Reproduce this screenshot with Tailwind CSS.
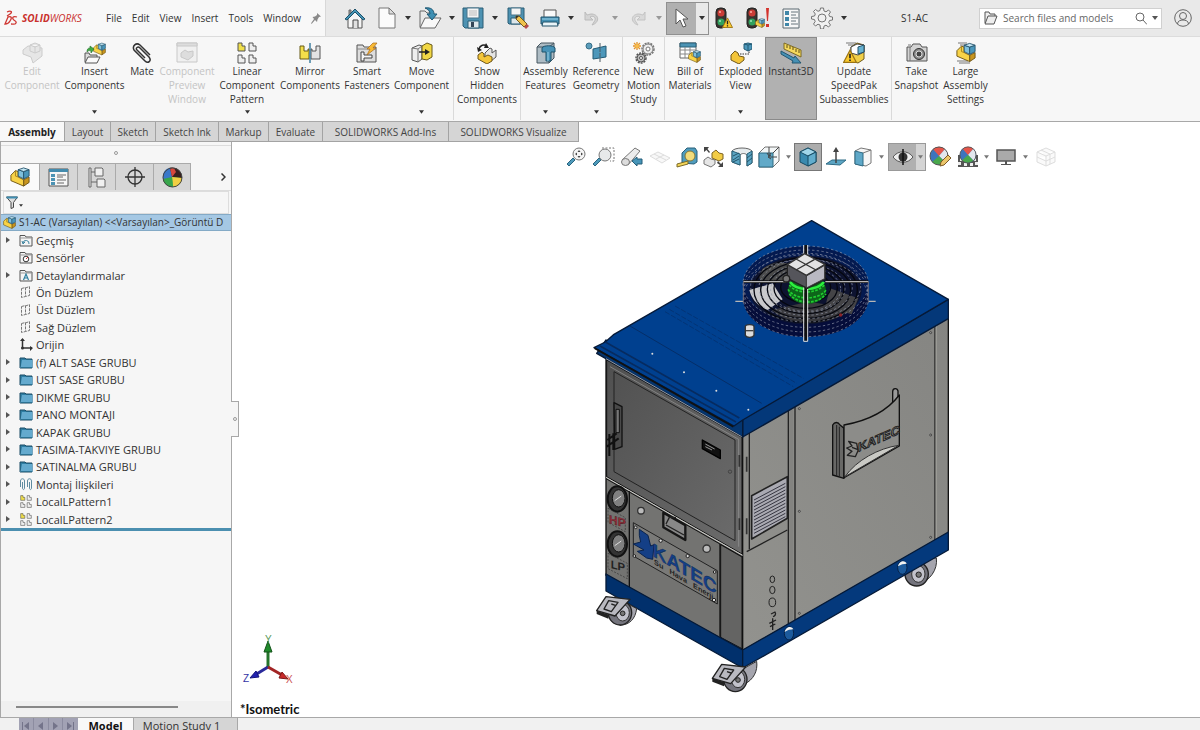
<!DOCTYPE html>
<html lang="en">
<head>
  <meta charset="UTF-8" />
  <meta name="viewport" content="width=device-width, initial-scale=1.0"/>
  <title>SOLIDWORKS - S1-AC</title>
  <script src="https://cdn.jsdelivr.net/npm/@tailwindcss/browser@4"></script>
</head>
<body class="h-screen flex flex-col overflow-hidden bg-[#f7f7f7] text-[#333] text-[10px] font-['Open_Sans','Noto_Sans',sans-serif]">

  <!-- Shared icons -->
  <svg class="hidden" aria-hidden="true">
    <symbol id="caret" viewBox="0 0 6 4"><path d="M0 0h6L3 4z" fill="currentColor"/></symbol>
    <symbol id="tri" viewBox="0 0 4 6"><path d="M0 0l4 3-4 3z" fill="#555"/></symbol>
    <symbol id="asm" viewBox="0 0 22 22">
      <path d="M15 14l6-3v6l-6 4z" fill="#c8951f" stroke="#6b5212"/>
      <path d="M1 9l5-5 3 1v6l6 3v7L1 15z" fill="#f8d347" stroke="#6b5212"/>
      <path d="M6 4v6l3 1" fill="none" stroke="#a3801f"/>
      <path d="M9 3l6 2v8l-6-3z" fill="#7fc0dc" stroke="#24536b"/><path d="M15 5l6-2v7l-6 3z" fill="#4a97bb" stroke="#24536b"/><path d="M9 3l6-2 6 2-6 2z" fill="#c3e6f3" stroke="#24536b"/>
    </symbol>
    <symbol id="folder" viewBox="0 0 14 13">
      <path d="M1 2h5l1 1h6v9H1z" fill="#2f7ea3" stroke="#1c4c66"/><path d="M3 4h10.500v8H1.500z" fill="#64aace"/><path d="M2 11.500h11" stroke="#2c7292"/>
    </symbol>
    <symbol id="sysfolder" viewBox="0 0 14 13"><path d="M1 12V1.500h5l1 1.500h6v9z" fill="#f4f4f4" stroke="#555"/><path d="M1 4h12" stroke="#999"/></symbol>
    <symbol id="plane" viewBox="0 0 14 14"><path d="M2.500 3.500l4-1v9l-4 1zM6.500 3l4-1.500v9l-4 1" fill="none" stroke="#777" stroke-dasharray="3 1"/></symbol>
    <symbol id="pattern" viewBox="0 0 22 22">
      <path d="M2 1h4v3h3v5H2z" fill="#f0df4a" stroke="#555"/>
      <path d="M13 1h4v3h3v5h-7zM2 13h4v3h3v5H2zM13 13h4v3h3v5h-7z" fill="#eee" stroke="#555"/>
    </symbol>
    <symbol id="lights" viewBox="0 0 22 22">
      <rect x="1" y="1" width="10" height="20" rx="4" fill="#3a332f" stroke="#222"/><circle cx="6" cy="6" r="3.500" fill="#c93c36"/><circle cx="5" cy="5" r="1" fill="#ffb1a8"/><circle cx="6" cy="15" r="3.500" fill="#31a15e"/><circle cx="5" cy="14" r="1" fill="#9feab8"/>
    </symbol>
    <symbol id="warn" viewBox="0 0 12 12"><path d="M6 1l5.500 10.500H.500z" fill="#f9c92f" stroke="#9b7415"/><path d="M6 4v4M6 9v1.300" stroke="#222" stroke-width="1.400"/></symbol>
    <symbol id="ball" viewBox="0 0 20 20">
      <circle cx="10" cy="10" r="9" fill="#3d75bd"/><path d="M10 10L4 3a9 9 0 0 1 12 0z" fill="#e6554a"/><path d="M10 10l6-7a9 9 0 0 1 0 13z" fill="#e3e7ee"/><path d="M10 10l6 6a9 9 0 0 1-13 0z" fill="#49a84d"/><circle cx="10" cy="10" r="9" fill="none" stroke="#555"/>
    </symbol>
  </svg>

  <!-- Title bar -->
  <header class="h-[37px] shrink-0 flex items-stretch border-b border-[#dcdcdc] bg-[#e9e9e9]">
    <div class="w-[326px] flex items-center bg-[#f8f8f8] border-r border-[#d8d8d8] text-[#333]">
      <div class="flex items-center gap-1 pl-1 w-[98px] text-[#c9302c]" aria-label="SOLIDWORKS">
        <svg class="w-[14px] h-[16px]" viewBox="0 0 14 16" fill="none" stroke="#cf3934" stroke-width="1.300"><path d="M3 2c4-2 6 0 3 2L3 6M1 14l3-7c4-1 4 1 2 4-1 2-3 3-5 3zM13 7c-3-1-5 0-4 2s4 2 3 4-3 1-5 1"/></svg>
        <span class="text-[10px] italic"><b>SOLID</b>WORKS</span>
      </div>
      <nav class="flex gap-[10px] pl-2">
        <a href="#">File</a><a href="#">Edit</a><a href="#">View</a><a href="#">Insert</a><a href="#">Tools</a><a href="#">Window</a>
      </nav>
      <button class="ml-auto mr-1" aria-label="Pin menu"><svg class="w-[10px] h-[11px]" viewBox="0 0 10 11"><path d="M6 0l4 3.500-2 .5-1.500 2.500L6 9 4 7 1 10.500 0 11l.5-1.500L3 6 1.500 4l2.500-.5L6 2z" fill="#8a8a8a"/></svg></button>
    </div>

    <div class="flex items-center pl-[13px] text-[#333]">
      <button class="w-8 flex justify-center" aria-label="Home"><svg class="w-[22px] h-[22px]" viewBox="0 0 22 22"><path d="M4 10v11h14V10l-7-6z" fill="#f5f5f5" stroke="#555"/><path d="M9 21v-8h5v8" fill="#e0e0e0" stroke="#444"/><path d="M5 8V3h2v3" fill="#999" stroke="#666"/><path d="M1 12L11 2l10 10-2 1-8-8-8 8z" fill="#4593b5" stroke="#1f526a"/></svg></button>
      <button class="w-8 flex justify-center" aria-label="New"><svg class="w-[18px] h-[22px]" viewBox="0 0 18 22"><path d="M1 1h10l6 6v14H1z" fill="#fbfbfb" stroke="#777"/><path d="M11 1v6h6z" fill="#ddd" stroke="#777"/></svg></button>
      <button class="w-[10px] flex justify-center" aria-label="New options"><svg class="w-[6px] h-1"><use href="#caret"/></svg></button>
      <button class="w-[34px] flex justify-center" aria-label="Open"><svg class="w-6 h-[22px]" viewBox="0 0 24 22"><path d="M2 20V4h5l2 2h4v14z" fill="#e8e8e8" stroke="#666"/><path d="M2 21L7 11h16l-6 10z" fill="#f8f8f8" stroke="#666"/><path d="M7 1c6-1 9 2 9 6h3l-5 6-5-6h3c0-3-2-5-5-6z" fill="#3d8fb3" stroke="#1f5873"/></svg></button>
      <button class="w-[10px] flex justify-center" aria-label="Open options"><svg class="w-[6px] h-1"><use href="#caret"/></svg></button>
      <button class="w-8 flex justify-center" aria-label="Save"><svg class="w-[22px] h-[22px]" viewBox="0 0 22 22"><path d="M1 1h20v20H3l-2-2z" fill="#4d92b2" stroke="#2b5d75"/><path d="M5 1h12v10H5z" fill="#f4f4f4" stroke="#49748a"/><path d="M7 4h8M7 6h8M7 8h8" stroke="#bbb"/><path d="M6 14h11v7H6z" fill="#dde6ea" stroke="#2b5d75"/><path d="M9 15h3v5H9z" fill="#345"/></svg></button>
      <button class="w-3 flex justify-center" aria-label="Save options"><svg class="w-[6px] h-1"><use href="#caret"/></svg></button>
      <button class="w-[34px] flex justify-center" aria-label="Save as"><svg class="w-[22px] h-[22px]" viewBox="0 0 22 22"><path d="M1 1h16v16H2l-1-1z" fill="#4d92b2" stroke="#2b5d75"/><path d="M4 1h10v7H4z" fill="#f4f4f4" stroke="#49748a"/><path d="M4 11h9v6H4z" fill="#dde6ea" stroke="#2b5d75"/><path d="M9 9l3 0 8 8-3 3-8-8z" fill="#f0c24c" stroke="#765a1b"/><path d="M17 20l3-3 2 2-3 3z" fill="#b74a4a"/><path d="M9 9h3l-3 3z" fill="#333"/></svg></button>
      <button class="w-[30px] flex justify-center" aria-label="Print"><svg class="w-5 h-5" viewBox="0 0 20 20"><path d="M4 10V2h12v8" fill="#fafafa" stroke="#555"/><path d="M1 9h18v7H1z" fill="#438fb2" stroke="#23536b"/><path d="M3 14h14l1 4H2z" fill="#e9f4f8" stroke="#23536b"/><path d="M2 11h16" stroke="#9fd3e8"/></svg></button>
      <button class="w-3 flex justify-center" aria-label="Print options"><svg class="w-[6px] h-1"><use href="#caret"/></svg></button>
      <button class="w-8 flex justify-center" aria-label="Undo" disabled><svg class="w-[18px] h-[15px]" viewBox="0 0 18 15"><path d="M1 1v8h8L6 6c4-2 7 1 4 5l-2 3c7-2 8-10 0-11-3 0-4 1-5 1z" fill="#d4d4d4" stroke="#bbb"/></svg></button>
      <button class="w-[11px] flex justify-center text-[#999]" aria-label="Undo options" disabled><svg class="w-[6px] h-1"><use href="#caret"/></svg></button>
      <button class="w-[34px] flex justify-center" aria-label="Redo" disabled><svg class="w-[18px] h-[15px] -scale-x-100" viewBox="0 0 18 15"><path d="M1 1v8h8L6 6c4-2 7 1 4 5l-2 3c7-2 8-10 0-11-3 0-4 1-5 1z" fill="#d9d9d9" stroke="#c3c3c3"/></svg></button>
      <button class="w-[10px] flex justify-center text-[#999]" aria-label="Redo options" disabled><svg class="w-[6px] h-1"><use href="#caret"/></svg></button>
      <div class="ml-[2px] h-[33px] flex border border-[#909090]">
        <button class="w-[29px] flex items-center justify-center bg-[#b0b0b0]" aria-label="Select"><svg class="w-[14px] h-5" viewBox="0 0 14 20"><path d="M1 1v15l4-4 3 7 3-1-3-7h5z" fill="#fff" stroke="#555"/></svg></button>
        <button class="w-3 flex items-center justify-center" aria-label="Select options"><svg class="w-[6px] h-1"><use href="#caret"/></svg></button>
      </div>
      <button class="w-[30px] flex justify-center" aria-label="Rebuild"><svg class="w-[18px] h-[22px]" viewBox="0 0 18 22"><use href="#lights" width="22" height="22"/><use href="#warn" x="7" y="10" width="11" height="11"/></svg></button>
      <button class="w-[38px] flex justify-center" aria-label="Rebuild errors"><svg class="w-6 h-[22px]" viewBox="0 0 24 22"><use href="#lights" width="22" height="22"/><use href="#asm" x="9" y="11" width="10" height="10"/><path d="M20 1h3l-1 13h-1zM20 17h3v3h-3z" fill="#d3322c"/></svg></button>
      <button class="w-7 flex justify-center" aria-label="File properties"><svg class="w-[18px] h-[21px]" viewBox="0 0 18 21"><path d="M1 1h16v19H1z" fill="#f7f7f7" stroke="#5a6970"/><path d="M3 3h4v4H3zM3 9h4v4H3zM3 15h4v3H3z" fill="#3f86a8"/><path d="M9 4h7M9 7h5M9 10h7M9 13h5M9 16h7" stroke="#66757c"/></svg></button>
      <button class="w-[34px] flex justify-center" aria-label="Options"><svg class="w-[22px] h-[22px]" viewBox="0 0 22 22" fill="#f1f1f1" stroke="#757575"><path d="M9.500 1h3l.5 3 2 .8 2.500-1.800 2 2-1.700 2.500.8 2 2.900.5v3l-3 .5-.8 2 1.800 2.500-2 2-2.500-1.800-2 .9-.5 2.900h-3L9 18l-2-.8L4.500 19l-2-2 1.700-2.500-.8-2-2.900-.5V9.500l3-.5.8-2L2.500 4.500l2-2L7 4.300 9 3.500z"/><circle cx="11" cy="11" r="4"/></svg></button>
      <button class="w-[9px] flex justify-center" aria-label="More options"><svg class="w-[6px] h-1"><use href="#caret"/></svg></button>
    </div>

    <h1 class="flex-1 self-center text-center pl-[2px]">S1-AC</h1>

    <div class="self-center w-[183px] h-[21px] flex items-center bg-white border border-[#d0d0d0] pl-1 pr-[3px] gap-[5px] text-[#555]">
      <svg class="w-[14px] h-[14px] shrink-0" viewBox="0 0 14 14" fill="#eee" stroke="#555"><path d="M1 12V1h4l1 2h5v2"/><path d="M1 13L4 5h9l-3 8z"/></svg>
      <input type="text" class="min-w-0 flex-1 text-[10px] outline-none placeholder:text-[#666]" placeholder="Search files and models" aria-label="Search files and models"/>
      <button aria-label="Search"><svg class="w-3 h-[13px]" viewBox="0 0 12 13" fill="none" stroke="#666"><circle cx="5" cy="5" r="4"/><path d="M8 8l4 4.500"/></svg></button>
      <button aria-label="Search options"><svg class="w-[6px] h-1"><use href="#caret"/></svg></button>
    </div>
    <button class="w-[38px] flex items-center justify-center pl-1" aria-label="Account"><svg class="w-[18px] h-[18px]" viewBox="0 0 18 18" fill="none" stroke="#666"><circle cx="9" cy="9" r="8.300"/><circle cx="9" cy="7" r="3.500"/><path d="M3.500 15c0-3 3-4 5.500-4s5.500 1 5.500 4"/></svg></button>
  </header>

  <!-- Ribbon -->
  <section class="h-[84px] shrink-0 flex items-stretch pl-[1px] pb-[1px] leading-[14px] text-center">
    <button disabled class="w-[62px] flex flex-col items-center pt-[5px] text-[#c4c4c4]">
      <svg class="w-[22px] h-[22px]" viewBox="0 0 22 22" fill="#e6e6e6" stroke="#ccc"><path d="M2 8l5-4 14 2v8l-9 7-2-6-8-3z"/><path d="M9 3l5-2 5 2v6l-5 2-5-2zM9 3l5 2 5-2M14 5v6"/></svg>
      <span>Edit<br>Component</span>
    </button>
    <button class="w-[63px] flex flex-col items-center pt-[5px]">
      <svg class="w-[22px] h-[22px]" viewBox="0 0 22 22"><path d="M1 20v-9h4l1 2h7v7z" fill="#ddd" stroke="#555"/><path d="M1 21l3-6h12l-3 6z" fill="#fafafa" stroke="#555"/><use href="#asm" x="9" width="13" height="14"/><path d="M3 10c0-3 1-4 3-4V4l4 3-3 4V9c-2-1-3 0-4 1z" fill="#3fa944" stroke="#237128" stroke-width=".6"/></svg>
      <span>Insert<br>Components</span>
      <svg class="w-[5px] h-1 mt-auto mb-[6px]"><use href="#caret"/></svg>
    </button>
    <button class="w-8 flex flex-col items-center pt-[5px]">
      <svg class="w-[22px] h-[22px]" viewBox="0 0 22 22" fill="none" stroke="#333" stroke-width="1.500"><path d="M14 16L6 8c-2-2 1-4 3-2l9 9c3 4-1 7-4 4L3 8C1 4 5 0 9 3l10 10"/></svg>
      <span>Mate</span>
    </button>
    <button disabled class="w-[58px] flex flex-col items-center pt-[5px] text-[#c4c4c4]">
      <svg class="w-[22px] h-[22px]" viewBox="0 0 22 22" fill="#f0f0f0" stroke="#c8c8c8"><path d="M1 1h20v19H1z"/><path d="M1 1h20v3H1z" fill="#ddd"/><path d="M5 11l4-3 3 2 5-1v5l-5 4-7-3z" fill="#ddd"/></svg>
      <span>Component<br>Preview<br>Window</span>
    </button>
    <button class="w-[62px] flex flex-col items-center pt-[5px]">
      <svg class="w-[22px] h-[22px]"><use href="#pattern"/></svg>
      <span>Linear<br>Component<br>Pattern</span>
      <svg class="w-[5px] h-1 mt-auto mb-[6px]"><use href="#caret"/></svg>
    </button>
    <button class="w-16 flex flex-col items-center pt-[5px]">
      <svg class="w-[22px] h-[22px]" viewBox="0 0 22 22"><path d="M1 4h4v5h4V7h1v10H1z" fill="#f3df4a" stroke="#665a16"/><path d="M21 4h-4v5h-4V7h-1v10h9z" fill="#e3e3e3" stroke="#555"/><path d="M11 1v20" stroke="#3f7fa0" stroke-width="1.500"/></svg>
      <span>Mirror<br>Components</span>
    </button>
    <button class="w-[50px] flex flex-col items-center pt-[5px]">
      <svg class="w-[22px] h-[22px]" viewBox="0 0 22 22"><path d="M1 20V3h6l1 2h12v15z" fill="#ddd" stroke="#555"/><path d="M1 7h19" stroke="#888"/><path d="M5 10h3v3h8v3H8v3H5z" fill="#f5f5f5" stroke="#444"/><path d="M17 1h4l-4 5h3l-9 7 3-6h-3z" fill="#f8ba35" stroke="#a7681a" stroke-width=".7"/></svg>
      <span>Smart<br>Fasteners</span>
    </button>
    <button class="w-[59px] flex flex-col items-center pt-[5px]">
      <svg class="w-[22px] h-[22px]" viewBox="0 0 22 22"><path d="M1 6l7-3 3 1v13l-4 3-6-2z" fill="#eee" stroke="#555"/><path d="M1 6l6 1 4-3M7 7v13" fill="none" stroke="#777"/><path d="M11 4l5-3 5 2v12l-5 3-5-1z" fill="#f1d745" stroke="#66591c"/><path d="M8 10h8" stroke="#222" stroke-width="1.500"/><path d="M14 7l5 3-5 3z" fill="#222"/></svg>
      <span>Move<br>Component</span>
      <svg class="w-[5px] h-1 mt-auto mb-[6px]"><use href="#caret"/></svg>
    </button>
    <button class="ml-[2px] w-[67px] flex flex-col items-center pt-[5px] border-l border-[#dadada]">
      <svg class="w-[22px] h-[22px]" viewBox="0 0 22 22"><path d="M9 11l5-5 2 1v4l4-3v7l-5 4-6-3z" fill="#e4e4e4" stroke="#555"/><path d="M2 13l4-3 2 2v3l4-2 4 2v4l-5 3-9-5z" fill="#f3c53a" stroke="#6f571a"/><path d="M3 7c1-4 5-5 8-3" fill="none" stroke="#222" stroke-width="1.500"/><path d="M10 1l3 5-5 0zM1 5l5 3-4 2z" fill="#222"/></svg>
      <span>Show<br>Hidden<br>Components</span>
    </button>
    <button class="w-[50px] flex flex-col items-center pt-[5px] border-l border-[#dadada]">
      <svg class="w-[22px] h-[22px]" viewBox="0 0 22 22"><path d="M2 5l4-4h13v15l-5 5H2z" fill="#aebcc4" stroke="#45555e"/><path d="M2 5h12v16M14 5l5-4" fill="none" stroke="#45555e"/><path d="M7 6c1-3 12-3 13 0v4h-4v9h-5v-9H7z" fill="#4792b6" stroke="#1f526b"/><path d="M13 10v9" stroke="#9bd0e5"/></svg>
      <span>Assembly<br>Features</span>
      <svg class="w-[5px] h-1 mt-auto mb-[6px]"><use href="#caret"/></svg>
    </button>
    <button class="w-[52px] flex flex-col items-center pt-[5px]">
      <svg class="w-[22px] h-[22px]" viewBox="0 0 22 22"><circle cx="4" cy="4" r="3" fill="#5b9dbb" stroke="#376e88"/><path d="M8 7l13-3v11L8 17z" fill="#4d97ba" stroke="#235a74"/><path d="M15 1v20" stroke="#4b5b63" stroke-dasharray="4 1"/></svg>
      <span>Reference<br>Geometry</span>
      <svg class="w-[5px] h-1 mt-auto mb-[6px]"><use href="#caret"/></svg>
    </button>
    <button class="w-[42px] flex flex-col items-center pt-[5px] border-l border-[#dadada]">
      <svg class="w-[22px] h-[22px]" viewBox="0 0 22 22"><circle cx="15" cy="7" r="6" fill="none" stroke="#777" stroke-width="1.500" stroke-dasharray="2 1"/><circle cx="15" cy="7" r="5" fill="#eee" stroke="#777"/><circle cx="15" cy="7" r="2" fill="#fff" stroke="#777"/><circle cx="8" cy="16" r="5" fill="none" stroke="#555" stroke-width="1.500" stroke-dasharray="2 1"/><circle cx="8" cy="16" r="4" fill="#bbb" stroke="#555"/><circle cx="8" cy="16" r="1.500" fill="#fff" stroke="#555"/><path d="M4 0v8M0 4h8M1 1l6 6M7 1L1 7" stroke="#e1932c" stroke-width="1.300"/><circle cx="4" cy="4" r="2" fill="#f7bd4c"/></svg>
      <span>New<br>Motion<br>Study</span>
    </button>
    <button class="w-[51px] flex flex-col items-center pt-[5px] border-l border-[#dadada]">
      <svg class="w-[22px] h-[22px]" viewBox="0 0 22 22"><path d="M1 1h16v15H1z" fill="#fff" stroke="#666"/><path d="M1 1h16v4H1z" fill="#4b93b4" stroke="#2b6079"/><path d="M1 8h16M1 12h16M6 5v11M11 5v11" stroke="#888"/><use href="#asm" x="9" y="8" width="13" height="13"/></svg>
      <span>Bill of<br>Materials</span>
    </button>
    <button class="w-[50px] flex flex-col items-center pt-[5px] border-l border-[#dadada]">
      <svg class="w-[22px] h-[22px]" viewBox="0 0 22 22"><path d="M1 13l4-4 3 2 1 3 5 1v3l-5 4-8-4z" fill="#f3c53a" stroke="#6f571a"/><path d="M10 12h9V8" fill="none" stroke="#333" stroke-dasharray="1.500 1"/><path d="M14 2l4-1 4 1v5l-4 2-4-2z" fill="#4d98bb" stroke="#235a74"/><path d="M14 2l4 1 4-1M18 3v6" fill="none" stroke="#235a74"/></svg>
      <span>Exploded<br>View</span>
      <svg class="w-[5px] h-1 mt-auto mb-[6px]"><use href="#caret"/></svg>
    </button>
    <button class="w-[52px] flex flex-col items-center pt-1 bg-[#b1b1b1] border border-[#8a8a8a]" aria-pressed="true">
      <svg class="w-[22px] h-[22px]" viewBox="0 0 22 22"><path d="M4 1l17 7v7L4 7z" fill="#f5d95d" stroke="#7d6a25"/><path d="M7 3v3M10 4v3M13 5v3M16 7v3M19 8v3" stroke="#5c4d17"/><path d="M1 9l13 7 1-2 6 7-9 0 1-2L1 12z" fill="#4690b4" stroke="#225670"/></svg>
      <span>Instant3D</span>
    </button>
    <button class="w-[74px] flex flex-col items-center pt-[5px]">
      <svg class="w-[22px] h-[22px]" viewBox="0 0 22 22"><path d="M3 1h10M5 3h8" stroke="#777"/><path d="M8 5l6-4 7 2v14l-6 4-7-2z" fill="#f1d04a" stroke="#6f5a1b"/><path d="M8 5l6-3 7 1v7l-6 3-7-2z" fill="#fff" stroke="#444"/><path d="M15 5l6-2v7l-6 2z" fill="#67b2d1" stroke="#24536b"/><use href="#warn" y="7" width="14" height="14"/></svg>
      <span>Update<br>SpeedPak<br>Subassemblies</span>
    </button>
    <button class="w-[50px] flex flex-col items-center pt-[5px] border-l border-[#dadada]">
      <svg class="w-[22px] h-[22px]" viewBox="0 0 22 22"><path d="M1 5h4l2-3h7l2 3h5v14H1z" fill="#d3d3d3" stroke="#555"/><path d="M4 5v14M2 3h3" stroke="#777"/><circle cx="13" cy="12" r="5.500" fill="#8b8b8b" stroke="#333"/><circle cx="13" cy="12" r="3" fill="#444" stroke="#ddd"/></svg>
      <span>Take<br>Snapshot</span>
    </button>
    <button class="w-[49px] flex flex-col items-center pt-[5px]">
      <svg class="w-[22px] h-[22px]" viewBox="0 0 22 22"><path d="M3 1h9M5 3h7M2 19h11M4 21h11" stroke="#777"/><use href="#asm" x="1" width="20" height="21"/></svg>
      <span>Large<br>Assembly<br>Settings</span>
    </button>
  </section>

  <!-- Command tabs -->
  <div class="h-[21px] shrink-0 flex bg-white border-t border-[#a8a8a8]">
    <div class="flex h-full text-[#444] leading-[18px] border-b border-[#a3a3a3]" role="tablist">
      <button role="tab" aria-selected="true" class="w-16 bg-[#f8f8f8] font-bold text-[#222]">Assembly</button>
      <button role="tab" class="w-[46px] bg-[#d5d5d5] border-l border-[#a3a3a3]">Layout</button>
      <button role="tab" class="w-[45px] bg-[#d5d5d5] border-l border-[#a3a3a3]">Sketch</button>
      <button role="tab" class="w-[63px] bg-[#d5d5d5] border-l border-[#a3a3a3]">Sketch Ink</button>
      <button role="tab" class="w-[50px] bg-[#d5d5d5] border-l border-[#a3a3a3]">Markup</button>
      <button role="tab" class="w-[54px] bg-[#d5d5d5] border-l border-[#a3a3a3]">Evaluate</button>
      <button role="tab" class="w-[126px] bg-[#d5d5d5] border-l border-[#a3a3a3]">SOLIDWORKS Add-Ins</button>
      <button role="tab" class="w-[131px] bg-[#d5d5d5] border-x border-[#a3a3a3]">SOLIDWORKS Visualize</button>
    </div>
  </div>

  <div class="flex-1 min-h-0 flex">
    <!-- Feature manager -->
    <aside class="w-[232px] shrink-0 flex flex-col relative z-10 bg-[#f6f6f6] border-x border-[#a8a8a8]">
      <div class="h-[18px] mt-[3px] border-t border-[#dcdcdc] flex justify-center"><i class="w-1 h-1 mt-[5px] rounded-full border border-[#999]"></i></div>
      <div class="h-[28px] flex border-b border-[#dcdcdc]">
        <div class="flex border-t border-[#aaa]" role="tablist">
          <button role="tab" aria-selected="true" class="w-[38px] flex items-center justify-center bg-[#fafafa]" aria-label="Feature tree"><svg class="w-5 h-5"><use href="#asm"/></svg></button>
          <button role="tab" class="w-[38px] flex items-center justify-center bg-[#d6d6d6] border-l border-[#aaa]" aria-label="Properties"><svg class="w-[21px] h-[19px]" viewBox="0 0 21 19"><path d="M1 1h19v17H1z" fill="#f6f6f6" stroke="#555"/><path d="M1 1h19v3H1z" fill="#438bad"/><path d="M3 6h4v3H3zM3 10h4v3H3zM3 14h4v3H3z" fill="#4c93b4"/><path d="M9 7h9M9 9h6M9 12h9M9 15h7" stroke="#666"/></svg></button>
          <button role="tab" class="w-[38px] flex items-center justify-center bg-[#d6d6d6] border-l border-[#aaa]" aria-label="Configurations"><svg class="w-[18px] h-[21px]" viewBox="0 0 18 21" fill="#f0f0f0" stroke="#666"><path d="M1 1h2v19H1zM3 5h4M3 15h6" /><path d="M7 1h7l1 1v7H7zM9 12h7l1 1v7H9z"/></svg></button>
          <button role="tab" class="w-[38px] flex items-center justify-center bg-[#d6d6d6] border-l border-[#aaa]" aria-label="DimXpert"><svg class="w-5 h-5" viewBox="0 0 20 20" fill="none" stroke="#333" stroke-width="1.300"><circle cx="10" cy="10" r="7"/><path d="M10 0v20M0 10h20"/></svg></button>
          <button role="tab" class="w-[38px] flex items-center justify-center bg-[#d6d6d6] border-x border-[#aaa]" aria-label="Display"><svg class="w-[21px] h-[21px]" viewBox="0 0 21 21"><circle cx="10.500" cy="10.500" r="9.500" fill="#37a54b"/><path d="M10 10L7 1c8-2 13 3 13 10z" fill="#382020"/><path d="M10 10l10 1c0 6-5 9-9 9z" fill="#f0cf43"/><path d="M10 10l1 10C5 20 2 16 1 13z" fill="#37a54b"/><path d="M10 10L1 12C0 5 4 1 8 1z" fill="#3a78c9"/><path d="M10 10L8 1l4 0 2 4z" fill="#d6483d"/><circle cx="10.500" cy="10.500" r="9.500" fill="none" stroke="#444"/></svg></button>
        </div>
        <button class="ml-auto w-4 flex items-center justify-center" aria-label="More tabs"><svg class="w-[5px] h-2" viewBox="0 0 5 8" fill="none" stroke="#333" stroke-width="1.500"><path d="M.5 .5L4 4 .5 7.500"/></svg></button>
      </div>
      <div class="h-[23px] mx-[2px] border border-[#ddd] flex items-center pl-[2px] gap-[1px]">
        <button class="flex items-end gap-[1px]" aria-label="Filter"><svg class="w-3 h-[13px]" viewBox="0 0 12 13"><path d="M.5 1h11L7.500 6.500v5L5 12.500v-6z" fill="#ddd" stroke="#444"/><path d="M.5 1.500h11" stroke="#3e8db0" stroke-width="2"/></svg><svg class="w-1 h-[3px] mb-[2px]"><use href="#caret"/></svg></button>
      </div>

      <ul class="h-[314px] grid grid-rows-[repeat(18,1fr)] text-[11px] leading-[15px] whitespace-nowrap text-[#333]">
        <li class="flex items-center gap-[3px] pl-[2px] text-[10px] bg-[#a5c8e4] border-y border-[#84aac6]"><svg class="w-[13px] h-[13px] shrink-0"><use href="#asm"/></svg>S1-AC (Varsayılan) &lt;&lt;Varsayılan&gt;_Görüntü D</li>
        <li class="flex items-center pl-[5px]"><button class="w-[13px]" aria-label="Expand"><svg class="w-1 h-[6px]"><use href="#tri"/></svg></button><svg class="w-[14px] h-[13px] mr-[3px]" viewBox="0 0 14 13"><use href="#sysfolder"/><path d="M4 9a3 3 0 1 1 6 1M3 7l1 3 2-2" fill="none" stroke="#3c839f"/></svg>Geçmiş</li>
        <li class="flex items-center pl-[18px]"><svg class="w-[14px] h-[13px] mr-[3px]" viewBox="0 0 14 13"><use href="#sysfolder"/><circle cx="7" cy="8" r="2.800" fill="#fff" stroke="#333"/><path d="M7 8l2-2" stroke="#c33"/></svg>Sensörler</li>
        <li class="flex items-center pl-[5px]"><button class="w-[13px]" aria-label="Expand"><svg class="w-1 h-[6px]"><use href="#tri"/></svg></button><svg class="w-[14px] h-[13px] mr-[3px]" viewBox="0 0 14 13"><use href="#sysfolder"/><path d="M4.500 11L7 5l2.500 6M5.500 9h3" fill="none" stroke="#2f7f9f" stroke-width="1.200"/></svg>Detaylandırmalar</li>
        <li class="flex items-center pl-[18px]"><svg class="w-[14px] h-[14px] mr-[3px]"><use href="#plane"/></svg>Ön Düzlem</li>
        <li class="flex items-center pl-[18px]"><svg class="w-[14px] h-[14px] mr-[3px]"><use href="#plane"/></svg>Üst Düzlem</li>
        <li class="flex items-center pl-[18px]"><svg class="w-[14px] h-[14px] mr-[3px]"><use href="#plane"/></svg>Sağ Düzlem</li>
        <li class="flex items-center pl-[18px]"><svg class="w-[14px] h-[13px] mr-[3px]" viewBox="0 0 14 13"><path d="M3.500 1v9H13" fill="none" stroke="#333" stroke-width="1.500"/><path d="M1 3l2.500-3L6 3zM11 8l3 2-3 3z" fill="#333"/><circle cx="3.500" cy="10" r="1.500" fill="#333"/></svg>Orijin</li>
        <li class="flex items-center pl-[5px]"><button class="w-[13px]" aria-label="Expand"><svg class="w-1 h-[6px]"><use href="#tri"/></svg></button><svg class="w-[14px] h-[13px] mr-[3px]"><use href="#folder"/></svg>(f) ALT SASE GRUBU</li>
        <li class="flex items-center pl-[5px]"><button class="w-[13px]" aria-label="Expand"><svg class="w-1 h-[6px]"><use href="#tri"/></svg></button><svg class="w-[14px] h-[13px] mr-[3px]"><use href="#folder"/></svg>UST SASE GRUBU</li>
        <li class="flex items-center pl-[5px]"><button class="w-[13px]" aria-label="Expand"><svg class="w-1 h-[6px]"><use href="#tri"/></svg></button><svg class="w-[14px] h-[13px] mr-[3px]"><use href="#folder"/></svg>DIKME GRUBU</li>
        <li class="flex items-center pl-[5px]"><button class="w-[13px]" aria-label="Expand"><svg class="w-1 h-[6px]"><use href="#tri"/></svg></button><svg class="w-[14px] h-[13px] mr-[3px]"><use href="#folder"/></svg>PANO MONTAJI</li>
        <li class="flex items-center pl-[5px]"><button class="w-[13px]" aria-label="Expand"><svg class="w-1 h-[6px]"><use href="#tri"/></svg></button><svg class="w-[14px] h-[13px] mr-[3px]"><use href="#folder"/></svg>KAPAK GRUBU</li>
        <li class="flex items-center pl-[5px]"><button class="w-[13px]" aria-label="Expand"><svg class="w-1 h-[6px]"><use href="#tri"/></svg></button><svg class="w-[14px] h-[13px] mr-[3px]"><use href="#folder"/></svg>TASIMA-TAKVIYE GRUBU</li>
        <li class="flex items-center pl-[5px]"><button class="w-[13px]" aria-label="Expand"><svg class="w-1 h-[6px]"><use href="#tri"/></svg></button><svg class="w-[14px] h-[13px] mr-[3px]"><use href="#folder"/></svg>SATINALMA GRUBU</li>
        <li class="flex items-center pl-[5px]"><button class="w-[13px]" aria-label="Expand"><svg class="w-1 h-[6px]"><use href="#tri"/></svg></button><svg class="w-[14px] h-[13px] mr-[3px]" viewBox="0 0 14 13" fill="none" stroke="#5e8ba0"><path d="M1.500 9V3c0-3 4-3 4 0v7c0 2-2 2-2 0V4M8.500 9V3c0-3 4-3 4 0v7c0 2-2 2-2 0V4"/></svg>Montaj İlişkileri</li>
        <li class="flex items-center pl-[5px]"><button class="w-[13px]" aria-label="Expand"><svg class="w-1 h-[6px]"><use href="#tri"/></svg></button><svg class="w-[14px] h-[13px] mr-[3px]"><use href="#pattern"/></svg>LocalLPattern1</li>
        <li class="flex items-center pl-[5px]"><button class="w-[13px]" aria-label="Expand"><svg class="w-1 h-[6px]"><use href="#tri"/></svg></button><svg class="w-[14px] h-[13px] mr-[3px]"><use href="#pattern"/></svg>LocalLPattern2</li>
      </ul>
      <div class="h-[3px] bg-[#4b8fb0]"></div>
      <div class="mt-auto h-4 bg-[#f0f0f0] pt-[5px] pl-[15px]"><div class="w-[162px] h-[2px] bg-[#888]"></div></div>
      <button class="absolute -right-2 top-[259px] w-2 h-9 bg-[#f6f6f6] border border-l-0 border-[#a8a8a8] flex items-center justify-center" aria-label="Collapse panel"><i class="w-1 h-1 rounded-full border border-[#999]"></i></button>
    </aside>

    <!-- Graphics area -->
    <main class="flex-1 min-w-0 relative bg-white overflow-hidden">
      <div class="absolute left-[330px] top-[1px] h-7 flex items-center text-[#777]">
        <button class="w-7 flex justify-center" aria-label="Zoom to fit"><svg class="w-5 h-5" viewBox="0 0 20 20"><path d="M7 11l2 2-6 6-2-2z" fill="#4d9abb" stroke="#2a6580"/><circle cx="13" cy="7" r="6" fill="#f5f5f5" stroke="#777"/><path d="M13 3l1.500 2h-3zM13 11l1.500-2h-3zM9 7l2-1.500v3zM17 7l-2-1.500v3z" fill="#444"/></svg></button>
        <button class="w-7 flex justify-center" aria-label="Zoom to area"><svg class="w-[22px] h-5" viewBox="0 0 22 20"><path d="M9 1h12v13h-4" fill="none" stroke="#777" stroke-dasharray="2 1.500"/><path d="M6 11l2 2-6 6-2-2z" fill="#4d9abb" stroke="#2a6580"/><circle cx="12" cy="8" r="6" fill="#e7e9ea" stroke="#777"/></svg></button>
        <button class="w-7 flex justify-center" aria-label="Previous view"><svg class="w-[22px] h-5" viewBox="0 0 22 20"><path d="M1 13L14 1l5 3L7 18z" fill="#ececec" stroke="#777"/><ellipse cx="4.500" cy="15" rx="4" ry="3.500" fill="#ddd" stroke="#777"/><path d="M11 14l5-4v2h5v5h-5v2z" fill="#4795b8" stroke="#245d78"/></svg></button>
        <button class="w-[27px] flex justify-center" aria-label="Section view" disabled><svg class="w-[22px] h-5" viewBox="0 0 22 20" fill="#f8f8f8" stroke="#ddd"><path d="M1 9l8-4 12 6-8 5zM5 7l12 6M7 12l8-4"/></svg></button>
        <button class="w-[27px] flex justify-center" aria-label="Measure"><svg class="w-[22px] h-[22px]" viewBox="0 0 22 22"><path d="M6 17V7l5-5 8 0 2 3v11l-3 2z" fill="#4f9cbd" stroke="#285f79"/><circle cx="14" cy="10" r="5" fill="#f2dc7b" stroke="#857636"/><path d="M1 18l11-3v3L1 21z" fill="#f4d658" stroke="#7c6a28"/></svg></button>
        <button class="w-7 flex justify-center" aria-label="Move view"><svg class="w-[22px] h-[22px]" viewBox="0 0 22 22"><path d="M1 14l4-3 3 2 4 1v4l-4 3-7-3z" fill="#e6e6e6" stroke="#777"/><path d="M9 7l4-3 3 3 4 1v5l-4 2-7-3z" fill="#f2cc45" stroke="#7b6223"/><path d="M1 1h5L4.500 3 7 6 6 7 3.500 4 1 6zM20 21h-5l2-2-3-2 1-2 3 3 2-2z" fill="#444"/></svg></button>
        <button class="w-[27px] flex justify-center" aria-label="Section"><svg class="w-[22px] h-5" viewBox="0 0 22 20"><path d="M1 4c3-4 17-4 20 0v12l-5 3V8c-2-2-5-2-7 0v10l-8-3z" fill="#e6ebed" stroke="#666"/><path d="M1 4l8 3v11l-8-3zM16 7l5-3v12l-5 3z" fill="#5ba5c4" stroke="#276079"/><path d="M2 9l6-3M2 13l6-4M2 15l6-3M16 11l5-4M16 15l5-4" stroke="#24546a"/></svg></button>
        <button class="w-[27px] flex justify-center" aria-label="View orientation"><svg class="w-[22px] h-[22px]" viewBox="0 0 22 22"><path d="M1 7l6-6h14v14l-6 6H1z" fill="#f3f6f7" stroke="#777"/><path d="M1 7h14v14H1z" fill="#61a9c8" stroke="#2d6a84"/><path d="M15 7l6-6M11 1v8M19 11h-8M9 7l2 3 2-3M13 9l-3 2 3 2" fill="none" stroke="#444"/></svg></button>
        <button class="w-3 flex justify-center" aria-label="Orientation options"><svg class="w-[5px] h-1"><use href="#caret"/></svg></button>
        <button class="w-7 h-7 flex items-center justify-center bg-[#acacac] border border-[#777]" aria-label="Shaded" aria-pressed="true"><svg class="w-[18px] h-5" viewBox="0 0 18 20"><path d="M1 5l8-4 8 4v10l-8 4-8-4z" fill="#3a8aaf" stroke="#174b63"/><path d="M1 5l8-4 8 4-8 4z" fill="#a1d5e9" stroke="#174b63"/><path d="M9 9l8-4v10l-8 4z" fill="#62adcd" stroke="#174b63"/></svg></button>
        <button class="w-[27px] flex justify-center" aria-label="Normal to"><svg class="w-5 h-5" viewBox="0 0 20 20"><path d="M0 17l6-4h14l-6 5z" fill="#5ca5c4" stroke="#2d6a84"/><path d="M10 16V4" stroke="#444" stroke-width="1.500"/><path d="M7 5l3-5 3 5z" fill="#444"/></svg></button>
        <button class="w-7 flex justify-center" aria-label="Display style"><svg class="w-[18px] h-5" viewBox="0 0 18 20"><path d="M1 4l6-3 10 2v13l-5 3-11-2z" fill="#f6f6f6" stroke="#777"/><path d="M1 4l8 2v13l-8-2z" fill="#5fa8c8" stroke="#2d6a84"/><path d="M9 6l8-3" stroke="#777"/></svg></button>
        <button class="w-[9px] flex justify-center" aria-label="Style options"><svg class="w-[5px] h-1"><use href="#caret"/></svg></button>
        <div class="ml-[2px] h-7 flex border border-[#999] bg-[#d4d4d4]">
          <button class="w-[27px] flex items-center justify-center bg-[#b0b0b0]" aria-label="Hide/show items"><svg class="w-5 h-4" viewBox="0 0 20 16"><path d="M0 8c5-7 15-7 20 0-5 7-15 7-20 0z" fill="#eee" stroke="#555"/><circle cx="10" cy="8" r="4.500" fill="#333"/><path d="M10 0v16" stroke="#111" stroke-width="1.500"/></svg></button>
          <button class="w-[9px] flex items-center justify-center" aria-label="Visibility options"><svg class="w-[5px] h-1"><use href="#caret"/></svg></button>
        </div>
        <button class="w-7 flex justify-center" aria-label="Edit appearance"><svg class="w-[22px] h-[22px]" viewBox="0 0 22 22"><use href="#ball" width="20" height="20"/><path d="M11 20l1-4 7-7 3 3-7 7z" fill="#ecc66b" stroke="#7c5a27"/></svg></button>
        <button class="w-7 flex justify-center" aria-label="Apply scene"><svg class="w-[22px] h-[22px]" viewBox="0 0 22 22"><path d="M1 9h20v12H1z" fill="#555"/><path d="M3 12h3v3H3zM16 12h3v3h-3zM1 16h3v3H1zM7 17h3v3H7zM13 17h3v3h-3zM18 16h3v3h-3z" fill="#eee"/><use href="#ball" x="2" width="18" height="18"/></svg></button>
        <button class="w-2 flex justify-center" aria-label="Scene options"><svg class="w-[5px] h-1"><use href="#caret"/></svg></button>
        <button class="w-8 flex justify-center" aria-label="View settings"><svg class="w-5 h-[18px]" viewBox="0 0 20 18"><path d="M1 2h18v11H1z" fill="#aaa" stroke="#555" stroke-width="1.500"/><path d="M9 13h2v3H9zM5 16h10v1H5z" fill="#555"/></svg></button>
        <button class="w-[6px] flex justify-center" aria-label="Settings options"><svg class="w-[5px] h-1"><use href="#caret"/></svg></button>
        <button class="w-9 flex justify-center" aria-label="Collision" disabled><svg class="w-5 h-5" viewBox="0 0 20 20" fill="#fafafa" stroke="#ddd"><path d="M1 5l9-4 9 4v10l-9 4-9-4zM1 5l9 4 9-4M10 9v10M1 10l9 4 9-4M5 3l9 4v10"/></svg></button>
      </div>

      <!-- Assembly model, isometric -->
      <svg class="absolute left-[358px] top-[68px] w-[370px] h-[490px]" viewBox="0 0 1110 1470" stroke-linejoin="round">
        <defs>
          <linearGradient id="door" x1="0" y1="0" x2="1" y2="1"><stop offset="0" stop-color="#505050"/><stop offset="1" stop-color="#6c6c6c"/></linearGradient>
          <linearGradient id="side" x1="0" y1="1" x2="1" y2="0"><stop offset="0" stop-color="#92928e"/><stop offset="1" stop-color="#858582"/></linearGradient>
          <g id="caster">
            <path d="M50 0h75c5 35-20 70-55 78l-30-30z" fill="#a5a5ae" stroke="#333" stroke-width="3"/>
            <ellipse cx="66" cy="48" rx="35" ry="36" fill="#74747d" stroke="#222" stroke-width="4"/>
            <ellipse cx="71" cy="48" rx="20" ry="25" fill="#c2c2cb" stroke="#333" stroke-width="3"/>
            <circle cx="72" cy="50" r="8" fill="#777" stroke="#222" stroke-width="3"/>
          </g>
          <g id="brake">
            <path d="M0 42L28 0l72 8-45 50z" fill="#b9b9c0" stroke="#222" stroke-width="4"/>
            <path d="M36 12l28 5-20 28-22-8zM44 22l12 4" fill="none" stroke="#222" stroke-width="4"/>
            <path d="M0 42l38 12-3 12L0 52z" fill="#222"/>
          </g>
        </defs>

        <use href="#caster" x="914" y="1044"/>
        <path d="M48 445L458 678V1322L48 1096z" fill="#737371" stroke="#111" stroke-width="4"/>
        <path d="M458 678L1075 322V970L458 1322z" fill="url(#side)" stroke="#111" stroke-width="4"/>

        <!-- door -->
        <path d="M50 450L456 682V1032L50 800z" fill="url(#door)" stroke="#111" stroke-width="3"/>
        <path d="M72 485L435 690V992L72 785z" fill="none" stroke="#222" stroke-width="3"/>
        <path d="M60 470L446 688V1010" fill="none" stroke="#999" stroke-width="2"/>
        <path d="M48 802L458 1036" stroke="#d0d0cc" stroke-width="3"/>
        <path d="M48 806L458 1041" stroke="#111" stroke-width="3"/>
        <path d="M72 578l24 12v120l-22 8z" fill="#494949" stroke="#111" stroke-width="4"/>
        <path d="M78 598h10v70H78z" fill="#777" stroke="#111" stroke-width="3"/>
        <path d="M52 690l28-20M50 710l36-25M58 672v66M70 670v50" stroke="#111" stroke-width="6"/>
        <path d="M337 690l54 30v26l-54-30z" fill="#111" stroke="#000" stroke-width="4"/><path d="M346 702l28 15M346 710l20 10" stroke="#999" stroke-width="3"/>
        <circle cx="420" cy="785" r="5" fill="none" stroke="#333" stroke-width="2"/>
        <path d="M448 735v35M448 925v35M470 740v45M470 925v48" stroke="#333" stroke-width="5"/>

        <!-- lower front -->
        <path d="M118 844V1133M390 1002V1280M450 1040V1310" stroke="#111" stroke-width="4"/>
        <path d="M392 1004L456 1041V1316L392 1282z" fill="#646463" stroke="#111" stroke-width="3"/>
        <g stroke="#111"><ellipse cx="82" cy="867" rx="29" ry="38" fill="#333" stroke-width="6"/><ellipse cx="86" cy="865" rx="19" ry="26" fill="#808080" stroke-width="3"/><ellipse cx="82" cy="1002" rx="29" ry="38" fill="#333" stroke-width="6"/><ellipse cx="86" cy="1000" rx="19" ry="26" fill="#808080" stroke-width="3"/></g>
        <path d="M74 872l20-14M74 1007l20-14" stroke="#ddd" stroke-width="3"/>
        <path d="M54 895l52 28v42l-52-28zM54 1030l58 30v46l-58-30z" fill="none" stroke="#333" stroke-width="2" stroke-dasharray="6 4"/>
        <text transform="translate(57 940) skewY(14)" font-size="36" font-weight="700" fill="#962f3a" stroke="#3b1216" stroke-width="1" font-family="Liberation Sans">HP</text>
        <text transform="translate(62 1074) skewY(14)" font-size="34" font-weight="700" fill="#222" font-family="Liberation Sans">LP</text>
        <circle cx="153" cy="902" r="10" fill="#bbb" stroke="#333" stroke-width="4"/><circle cx="350" cy="1016" r="11" fill="#bbb" stroke="#333" stroke-width="4"/>
        <path d="M220 908l66 38v44l-66-38z" fill="#888" stroke="#161616" stroke-width="7"/><path d="M228 942l10-20 20 0M228 945l54 30" fill="none" stroke="#222" stroke-width="4"/>
        <path d="M130 938L382 1082V1182L130 1038z" fill="#7a7a78" stroke="#222" stroke-width="3"/>
        <path d="M148 958l26 18 8 32 10-4-4 44-18-4-28-20 20-4-32-18 22-6-4-20z" fill="#143f86" stroke="#0a234d" stroke-width="3"/>
        <text transform="translate(188 1038) skewY(31)" font-size="57" font-weight="700" fill="#143f86" stroke="#0a234d" stroke-width="1" font-family="Liberation Sans">KATEC</text>
        <text transform="translate(192 1062) skewY(31)" font-size="22" font-weight="700" fill="#222" font-family="Liberation Sans" xml:space="preserve">Su   Hava   Enerji</text>
        <g fill="#ddd" stroke="#222" stroke-width="3"><circle cx="137" cy="952" r="4"/><circle cx="212" cy="992" r="5"/><circle cx="293" cy="1038" r="5"/><circle cx="374" cy="1086" r="4"/><circle cx="133" cy="1038" r="4"/><circle cx="372" cy="1170" r="5"/></g>

        <!-- side panel -->
        <path d="M478 668V1018M595 602V1245M615 590V1232M1035 346V990" stroke="#222" stroke-width="4"/>
        <path d="M598 600h12V1235l-12 7z" fill="#838380"/><path d="M1038 345V988" stroke="#c2c2bd" stroke-width="2"/>
        <path d="M470 1025L592 960" stroke="#222" stroke-width="4"/>
        <path d="M485 857L592 800V925L485 987z" fill="#aaaab2" stroke="#222" stroke-width="5"/>
        <g stroke="#363641" stroke-width="3"><path d="M492 870l94-50M492 880l94-50M492 890l94-50M492 900l94-50M492 910l94-50M492 920l94-50M492 930l94-50M492 940l94-50M492 950l94-50M492 960l94-50M492 970l94-50"/></g>
        <g fill="none" stroke="#222" stroke-width="3"><ellipse cx="547" cy="1108" rx="7" ry="10"/><ellipse cx="547" cy="1140" rx="8" ry="11"/><ellipse cx="547" cy="1177" rx="10" ry="13"/></g>
        <path d="M543 1212l12-6c4 6 0 12-6 14M538 1240l20-10M540 1250l16-8M548 1225v35" fill="none" stroke="#222" stroke-width="4"/>
        <g fill="#aaa" stroke="#222" stroke-width="2"><circle cx="628" cy="596" r="3"/><circle cx="628" cy="904" r="3"/><circle cx="628" cy="1210" r="3"/><circle cx="1022" cy="368" r="3"/><circle cx="1022" cy="675" r="3"/><circle cx="1022" cy="982" r="3"/></g>

        <!-- document pocket -->
        <path d="M908 545c0-12 14-12 16-2v28l-16 10z" fill="#999" stroke="#111" stroke-width="4"/>
        <path d="M728 645c6-10 16-10 22 0l12 10v150l-34-10z" fill="#686866" stroke="#111" stroke-width="4"/>
        <path d="M740 645v155M748 650v150" stroke="#222" stroke-width="3"/>
        <path d="M762 645C835 632 890 605 928 555V708L762 803z" fill="#8c8c89" stroke="#111" stroke-width="4"/>
        <path d="M765 800C800 750 865 715 926 706z" fill="#c9c9c4" stroke="#333" stroke-width="3"/>
        <text transform="translate(804 726) skewY(-24)" font-size="37" font-weight="700" fill="#8c8c89" stroke="#222" stroke-width="3" font-family="Liberation Sans">KATEC</text>
        <path d="M776 694l24 6 4 22-8 18-24-4 14-12-16-10 16-6zM786 712l16 6" fill="none" stroke="#222" stroke-width="4"/>

        <!-- roof -->
        <path d="M458 628L1075 268V326L458 681z" fill="#043879" stroke="#061a38" stroke-width="4"/>
        <path d="M48 390L440 632 458 628V681L20 430z" fill="#04356f" stroke="#061a38" stroke-width="4"/>
        <path d="M665 32L1075 268 458 630 432 648 12 413 46 396 72 373z" fill="#00408f" stroke="#061a38" stroke-width="4"/>
        <path d="M14 415L430 650" stroke="#111" stroke-width="5"/><path d="M46 396L448 624M30 408L438 636" stroke="#062b60" stroke-width="5"/><path d="M48 446L455 680" stroke="#ddd" stroke-width="2"/>
        <path d="M120 348L515 580" fill="none" stroke="#052e68" stroke-width="3"/>
        <path d="M225 305L610 530M255 288L640 505M238 298L620 520" fill="none" stroke="#052e68" stroke-width="2" stroke-dasharray="16 5"/>
        <g fill="#ddd"><circle cx="187" cy="431" r="3"/><circle cx="282" cy="487" r="3"/><circle cx="379" cy="542" r="3"/><circle cx="475" cy="599" r="3"/></g>

        <!-- fan -->
        <ellipse cx="647" cy="265" rx="188" ry="117" fill="#050d3a"/>
        <ellipse cx="647" cy="222" rx="188" ry="114" fill="#041a50"/>
        <ellipse cx="647" cy="240" rx="168" ry="103" fill="#0d1330"/>
        <path d="M520 175c30-22 60-22 90-8l-8 50-90-5c-8-10-2-24 8-37z" fill="#4a4a4a"/>
        <path d="M478 240l70-20 30 48-45 32c-30-12-48-32-55-60z" fill="#c9c9cc"/>
        <path d="M545 300l110-25 130 20c-60 55-180 60-240 5z" fill="#3a3a3e"/>
        <path d="M720 235l85 30-20 48-80-22z" fill="#444447"/>
        <g fill="none" stroke="#05070f" stroke-width="4"><ellipse cx="647" cy="232" rx="75" ry="46"/><ellipse cx="647" cy="235" rx="95" ry="60"/><ellipse cx="647" cy="238" rx="115" ry="73"/><ellipse cx="647" cy="240" rx="135" ry="85"/><ellipse cx="647" cy="240" rx="155" ry="97"/></g>
        <g fill="none" stroke="#959cae" stroke-width="2" stroke-dasharray="7 7"><ellipse cx="647" cy="222" rx="188" ry="114"/><ellipse cx="647" cy="236" rx="187" ry="116"/><ellipse cx="647" cy="250" rx="187" ry="116"/><ellipse cx="647" cy="264" rx="187" ry="116"/><ellipse cx="647" cy="228" rx="165" ry="98"/><ellipse cx="647" cy="232" rx="140" ry="84"/><ellipse cx="647" cy="235" rx="118" ry="72"/><ellipse cx="647" cy="238" rx="105" ry="66"/></g>
        <ellipse cx="651" cy="240" rx="57" ry="42" fill="#0d651a"/>
        <g fill="none" stroke="#20cf31" stroke-width="5" stroke-dasharray="8 4"><path d="M598 225c20 28 80 28 105 0M594 238c20 34 94 34 116 0M598 252c25 32 85 32 110 0"/></g>
        <path d="M600 216c20 28 80 28 102 0" fill="none" stroke="#2cf03e" stroke-width="8"/>
        <g fill="none" stroke="#111" stroke-width="8"><path d="M460 215H588M706 215H835M647 232V392M647 105V140"/></g>
        <g fill="none" stroke="#b6b6b6" stroke-width="4"><path d="M460 215H588M706 215H835M436 274h24M835 274h22"/><path d="M460 215v65M835 215v65" stroke="#667" stroke-width="3"/></g>
        <path d="M641 232V394h12V232M641 138V105M653 138V105" fill="none" stroke="#ddd" stroke-width="3"/>
        <path d="M592 166l52-34 61 33v42l-53 28-60-30z" fill="#55555b" stroke="#222" stroke-width="4"/>
        <path d="M592 164l52-33 61 32-56 33z" fill="#e2e2e3" stroke="#333" stroke-width="4"/><path d="M618 147l60 33M674 148l-56 32" stroke="#333" stroke-width="4"/>
        <path d="M649 198v36l55-28v-40z" fill="#b9b9c2" stroke="#333" stroke-width="3"/>
        <circle cx="589" cy="206" r="10" fill="#777" stroke="#222" stroke-width="4"/><circle cx="752" cy="315" r="5" fill="#8c2328"/>
        <path d="M466 350c0-8 26-8 26 0v26c-4 8-22 8-26 0z" fill="#ddd" stroke="#333" stroke-width="4"/><path d="M468 362h22" stroke="#444" stroke-width="4"/>

        <!-- base frame -->
        <path d="M48 1092L458 1320V1374L48 1143z" fill="#01306c" stroke="#051a38" stroke-width="4"/>
        <path d="M458 1320L1075 966V1020L458 1374z" fill="#04397c" stroke="#051a38" stroke-width="4"/>
        <ellipse cx="597" cy="1270" rx="14" ry="20" fill="#1c5a9c" stroke="#062247" stroke-width="3"/><path d="M584 1266c4-20 24-18 26-8-8 0-18 2-26 8z" fill="#f2f2f2"/>
        <ellipse cx="937" cy="1073" rx="14" ry="20" fill="#1c5a9c" stroke="#062247" stroke-width="3"/><path d="M924 1069c4-20 24-18 26-8-8 0-18 2-26 8z" fill="#f2f2f2"/>
        <path d="M74 1160l66 36c-4 30-20 48-50 50z" fill="#a5a5ae" stroke="#333" stroke-width="3"/>
        <ellipse cx="90" cy="1208" rx="35" ry="37" fill="#74747d" stroke="#222" stroke-width="4"/><ellipse cx="98" cy="1208" rx="20" ry="25" fill="#c2c2cb" stroke="#333" stroke-width="3"/><circle cx="98" cy="1210" r="7" fill="#777" stroke="#222" stroke-width="3"/>
        <use href="#brake" x="20" y="1160"/>
        <path d="M420 1372l40 4 40-22c4 30-10 55-36 68z" fill="#a5a5ae" stroke="#333" stroke-width="3"/>
        <ellipse cx="436" cy="1408" rx="35" ry="37" fill="#74747d" stroke="#222" stroke-width="4"/><ellipse cx="444" cy="1408" rx="20" ry="25" fill="#c2c2cb" stroke="#333" stroke-width="3"/><circle cx="444" cy="1410" r="7" fill="#777" stroke="#222" stroke-width="3"/>
        <use href="#brake" x="367" y="1363"/>
      </svg>

      <!-- Orientation triad -->
      <svg class="absolute left-2 bottom-[28px] w-[56px] h-[54px]" viewBox="0 0 56 54">
        <path d="M28 32V14" stroke="#25752c" stroke-width="3"/><path d="M24 17l4-11 4 11z" fill="#1f8a2a" stroke="#125319"/>
        <path d="M28 32l-13 8" stroke="#2a2a9b" stroke-width="3"/><path d="M10 43l6-7 3 6z" fill="#2222b0" stroke="#14147a"/>
        <path d="M28 32l14 8" stroke="#a22525" stroke-width="3"/><path d="M48 44l-9-1 3-6z" fill="#c92a2a" stroke="#7d1717"/>
        <g font-family="Liberation Sans" font-size="10"><text x="25" y="8" fill="#5d9b5d">Y</text><text x="3" y="47" fill="#3434a5">Z</text><text x="46" y="48" fill="#cc5555">X</text></g>
      </svg>
      <p class="absolute left-2 bottom-0 text-[13px] leading-4 font-bold font-['Lato',sans-serif] text-[#111]">*Isometric</p>
    </main>
  </div>

  <!-- Document tabs -->
  <footer class="h-[13px] shrink-0 flex border-t border-[#a8a8a8] bg-[#f1f1f1] text-[11px] leading-3">
    <div class="ml-[19px] w-[59px] grid grid-cols-4 bg-[#a2a2b4] text-[#74748a]">
      <button class="border-r border-[#8c8ca0] flex justify-center pt-1" aria-label="First tab"><svg class="w-[7px] h-2" viewBox="0 0 7 8" fill="currentColor"><path d="M0 0h1v8H0zM7 0v8L2 4z"/></svg></button>
      <button class="border-r border-[#8c8ca0] flex justify-center pt-1" aria-label="Previous tab"><svg class="w-[7px] h-2" viewBox="0 0 7 8" fill="currentColor"><path d="M6 0v8L1 4z"/></svg></button>
      <button class="border-r border-[#8c8ca0] flex justify-center pt-1" aria-label="Next tab"><svg class="w-[7px] h-2" viewBox="0 0 7 8" fill="currentColor"><path d="M1 0v8l5-4z"/></svg></button>
      <button class="flex justify-center pt-1" aria-label="Last tab"><svg class="w-[7px] h-2" viewBox="0 0 7 8" fill="currentColor"><path d="M0 0v8l5-4zM6 0h1v8H6z"/></svg></button>
    </div>
    <button class="w-[55px] pt-[2px] bg-[#f8f8f8] font-bold text-[#111]">Model</button>
    <button class="w-[105px] pt-[2px] pr-2 bg-[#d5d5d5] border-x border-[#a8a8a8]">Motion Study 1</button>
  </footer>

</body>
</html>
